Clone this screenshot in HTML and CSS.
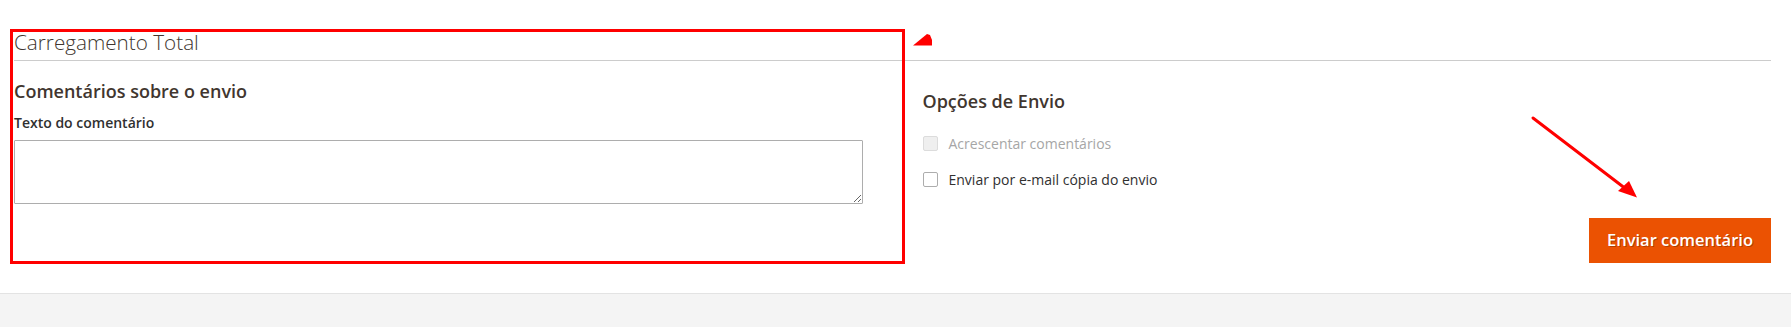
FILE: index.html
```html
<!DOCTYPE html>
<html lang="pt-BR">
<head>
  <meta charset="UTF-8">
  <meta name="viewport" content="width=device-width, initial-scale=1.0">
  <title>Novo envio</title>
  <link rel="stylesheet" href="styles.css">
</head>
<body>
  <div class="page">
    <section class="section">
      <div class="section-title">Carregamento Total</div>

      <div class="section-content">
        <div class="section-item">
          <h3 class="item-title">Comentários sobre o envio</h3>
          <label class="field-label" for="comment">Texto do comentário</label>
          <textarea id="comment" class="field-textarea"></textarea>
        </div>

        <div class="section-item item-options">
          <h3 class="item-title">Opções de Envio</h3>
          <label class="check disabled">
            <input type="checkbox" disabled>
            <span class="check-box"></span>
            <span>Acrescentar comentários</span>
          </label>
          <label class="check">
            <input type="checkbox">
            <span class="check-box"></span>
            <span>Enviar por e-mail cópia do envio</span>
          </label>
          <div class="actions">
            <button type="submit" class="action-primary">Enviar comentário</button>
          </div>
        </div>
      </div>
    </section>
  </div>

  <div class="footer"></div>

  <!-- red markup drawn over the screenshot -->
  <svg class="markup" width="1791" height="327" viewBox="0 0 1791 327">
    <rect x="11.5" y="30.5" width="892" height="232" fill="none" stroke="#ff0000" stroke-width="3"/>
    <polygon points="913,45.5 927,34 930,35 932,40 932,45.5" fill="#ff0000"/>
    <line x1="1533" y1="118" x2="1626" y2="189" stroke="#ff0000" stroke-width="3" stroke-linecap="round"/>
    <polygon points="1637,197.5 1618,191 1629,181" fill="#ff0000"/>
  </svg>
</body>
</html>
```

FILE: styles.css
```css
body {
  margin: 0;
  font-family: "Open Sans", "Liberation Sans", sans-serif;
  color: #303030;
  background: #fff;
  position: relative;
}

.page {
  padding: 28px 20px 30px 14px;
}

.section-title {
  font-size: 20.7px;
  line-height: 28px;
  font-weight: 300;
  color: #41362f;
  padding-bottom: 4px;
  border-bottom: 1px solid #cccccc;
}

.section-content {
  display: grid;
  grid-template-columns: 1fr 1fr;
  column-gap: 60px;
}

.item-title {
  margin: 18px 0 0;
  font-size: 18px;
  line-height: 24px;
  font-weight: 600;
  color: #41362f;
}

.item-options .item-title {
  margin-top: 28px;
  margin-bottom: 21px;
}

.field-label {
  display: block;
  margin: 10px 0 8px;
  font-size: 14px;
  line-height: 19px;
  font-weight: 600;
  color: #303030;
}

.field-textarea {
  display: block;
  box-sizing: border-box;
  width: 100%;
  height: 64px;
  margin: 0;
  border: 1px solid #adadad;
  border-radius: 1px;
  font-family: inherit;
  font-size: 14px;
}

.check {
  display: flex;
  align-items: center;
  gap: 11px;
  font-size: 14px;
  line-height: 19px;
  margin-bottom: 17px;
  color: #303030;
}

.check input {
  display: none;
}

.check-box {
  box-sizing: border-box;
  width: 15px;
  height: 15px;
  border: 1px solid #adadad;
  border-radius: 2px;
  background: #fff;
}

.check.disabled {
  color: #a6a6a6;
}

.check.disabled .check-box {
  background: #efefef;
  border-color: #dcdcdc;
}

.actions {
  display: flex;
  justify-content: flex-end;
  margin-top: 29px;
}

.action-primary {
  font-family: inherit;
  font-size: 16.5px;
  line-height: 22px;
  font-weight: 600;
  color: #fff;
  background: #eb5202;
  border: 1px solid #eb5202;
  border-radius: 0;
  padding: 10px 17px 11px;
  text-shadow: 1px 1px 0 rgba(0, 0, 0, 0.25);
  cursor: pointer;
}

.footer {
  border-top: 1px solid #e3e3e3;
  background: #f4f4f4;
  min-height: 40px;
}

.markup {
  position: absolute;
  top: 0;
  left: 0;
  pointer-events: none;
}
```
